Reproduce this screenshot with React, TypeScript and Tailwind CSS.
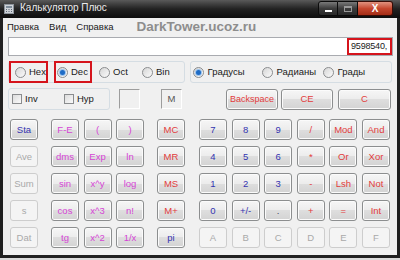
import clsx from "clsx";

type Tone = "b" | "p" | "r" | "d" | "k";

const toneText: Record<Tone, string> = {
  b: "text-[#3434b0]",
  p: "text-[#d544d5]",
  r: "text-[#e23c3c]",
  d: "text-[#a9a9a9]",
  k: "text-[#44445a]",
};

const colA: [string, Tone][] = [["Sta", "b"], ["Ave", "d"], ["Sum", "d"], ["s", "d"], ["Dat", "d"]];
const colsB: [string, Tone][][] = [
  [["F-E", "p"], ["dms", "p"], ["sin", "p"], ["cos", "p"], ["tg", "p"]],
  [["(", "p"], ["Exp", "p"], ["x^y", "p"], ["x^3", "p"], ["x^2", "p"]],
  [[")", "p"], ["ln", "p"], ["log", "p"], ["n!", "p"], ["1/x", "p"]],
];
const colE: [string, Tone][] = [["MC", "r"], ["MR", "r"], ["MS", "r"], ["M+", "r"], ["pi", "b"]];
const colsF: [string, Tone][][] = [
  [["7", "b"], ["4", "b"], ["1", "b"], ["0", "b"], ["A", "d"]],
  [["8", "b"], ["5", "b"], ["2", "b"], ["+/-", "b"], ["B", "d"]],
  [["9", "b"], ["6", "b"], ["3", "b"], [".", "k"], ["C", "d"]],
  [["/", "r"], ["*", "r"], ["-", "r"], ["+", "r"], ["D", "d"]],
  [["Mod", "r"], ["Or", "r"], ["Lsh", "r"], ["=", "r"], ["E", "d"]],
  [["And", "r"], ["Xor", "r"], ["Not", "r"], ["Int", "r"], ["F", "d"]],
];

function Key({ label, tone, className }: { label: string; tone: Tone; className?: string }) {
  const off = tone === "d";
  return (
    <div
      className={clsx(
        "flex h-[21px] items-center justify-center rounded-[3px] border text-[9.5px] leading-none",
        off
          ? "border-[#cdcdcd] bg-[#f4f4f4]"
          : "border-[#8c8e8f] bg-[linear-gradient(#f6f6f6,#ececec_50%,#dedede_50%,#d3d3d3)] shadow-[inset_0_0_0_1px_#fbfbfb]",
        toneText[tone],
        className ?? "w-[28px]"
      )}
    >
      {label}
    </div>
  );
}

function Column({ keys }: { keys: [string, Tone][] }) {
  return (
    <div className="flex flex-col gap-[6px]">
      {keys.map(([l, t]) => (
        <Key key={l} label={l} tone={t} />
      ))}
    </div>
  );
}

function Radio({ on }: { on?: boolean }) {
  return (
    <span className="flex h-[11px] w-[11px] shrink-0 items-center justify-center rounded-full border border-[#8a8c8e] bg-linear-to-br from-[#d6d6d6] to-[#fbfbfb]">
      {on && <span className="h-[5px] w-[5px] rounded-full bg-[#1e6cc6] shadow-[0_0_0_1px_#9cc3ec]" />}
    </span>
  );
}

function Check() {
  return (
    <span className="h-[10px] w-[10px] shrink-0 border border-[#8a8c8e] bg-linear-to-br from-[#dcdcdc] to-[#fafafa]" />
  );
}

export default function App() {
  return (
    <div className="h-[260px] w-[400px] bg-[#dadada] font-['Liberation_Sans',Arial,sans-serif]">
      <div className="flex h-[258px] flex-col bg-[#202020]">
        {/* title bar */}
        <div className="flex h-[18px] items-start bg-linear-to-b from-[#5a5a5a] via-[#222222] to-[#0e0e0e]">
          <svg className="ml-[4px] mt-[4px]" width="10" height="10" viewBox="0 0 10 10">
            <rect x="0.5" y="0.5" width="9" height="9" fill="#cfd3d8" stroke="#8d949c" />
            <rect x="2" y="2" width="6" height="2" fill="#7d8b99" />
            <path d="M2 5.5h1M4.5 5.5h1M7 5.5h1M2 7.5h1M4.5 7.5h1M7 7.5h1" stroke="#5a6572" />
          </svg>
          <span className="ml-[6px] mt-[3px] text-[10px] leading-none text-[#ececec]">Калькулятор Плюс</span>
          <div className="ml-auto mr-[7px] mt-[1px] flex">
            <div className="flex h-[15px] w-[20px] items-end justify-center rounded-l-[3px] border border-[#0c0c0c] bg-linear-to-b from-[#7a7a7a] via-[#3c3c3c] to-[#2a2a2a] pb-[3px]">
              <span className="h-[2px] w-[7px] bg-white" />
            </div>
            <div className="flex h-[15px] w-[20px] items-center justify-center border border-l-0 border-[#0c0c0c] bg-linear-to-b from-[#7a7a7a] via-[#3c3c3c] to-[#2a2a2a]">
              <span className="h-[6px] w-[8px] border border-t-2 border-[#9a9a9a]" />
            </div>
            <div className="flex h-[15px] w-[35px] items-center justify-center rounded-r-[3px] border border-l-0 border-[#3a0c06] bg-linear-to-b from-[#e0927f] via-[#c5472f] to-[#a42d16] text-[10px] font-bold leading-none text-white">
              X
            </div>
          </div>
        </div>

        {/* client area */}
        <div className="mx-[3px] flex h-[237px] flex-col bg-[#f0f0f0] px-[5px]">
          <div className="-ml-[1px] flex h-[18px] items-center gap-[10px] text-[9.5px] text-[#1a1a1a]">
            <span>Правка</span>
            <span>Вид</span>
            <span>Справка</span>
            <span className="ml-[13px] text-[13.5px] font-bold text-[#8d8d8d]">DarkTower.ucoz.ru</span>
          </div>

          <div className="mt-[1px] flex h-[19px] w-[385px] justify-end border border-[#a9abb0] bg-white">
            <div className="flex h-full items-center border-2 border-[#d5141c] pl-[2px] pr-[3px] text-[9px] tracking-[-0.2px] text-[#1a1a1a]">
              9598540,
            </div>
          </div>

          {/* base / angle radios */}
          <div className="mt-[5px] flex h-[22px] text-[9.5px] text-[#1a1a1a]">
            <div className="flex w-[177px] items-center rounded-[3px] border border-[#d5dde3]">
              <div className="flex h-[22px] w-[39px] shrink-0 items-center gap-[3px] border-2 border-[#d5141c] pl-[4px]">
                <Radio />
                <span>Hex</span>
              </div>
              <div className="ml-[6px] flex h-[22px] w-[38px] shrink-0 items-center gap-[3px] border-2 border-[#d5141c] pl-[1px]">
                <Radio on />
                <span>Dec</span>
              </div>
              <div className="ml-[7px] flex w-[43px] items-center gap-[3px]">
                <Radio />
                <span>Oct</span>
              </div>
              <div className="flex items-center gap-[3px]">
                <Radio />
                <span>Bin</span>
              </div>
            </div>
            <div className="ml-[5px] flex w-[203px] items-center rounded-[3px] border border-[#d5dde3] pl-[2px]">
              <div className="flex w-[69px] items-center gap-[4px]">
                <Radio on />
                <span>Градусы</span>
              </div>
              <div className="flex w-[61px] items-center gap-[4px]">
                <Radio />
                <span>Радианы</span>
              </div>
              <div className="flex items-center gap-[4px]">
                <Radio />
                <span>Грады</span>
              </div>
            </div>
          </div>

          {/* inv / hyp / memory / clear */}
          <div className="mt-[5px] flex h-[22px] items-center text-[9.5px] text-[#1a1a1a]">
            <div className="flex h-[22px] w-[102px] items-center rounded-[3px] border border-[#d5dde3] pl-[3px]">
              <div className="flex w-[52px] items-center gap-[3px]">
                <Check />
                <span>Inv</span>
              </div>
              <div className="flex items-center gap-[3px]">
                <Check />
                <span>Hyp</span>
              </div>
            </div>
            <div className="ml-[9px] h-[20px] w-[21px] border border-b-white border-l-[#9d9d9d] border-r-white border-t-[#9d9d9d]" />
            <div className="ml-[21px] flex h-[20px] w-[21px] items-center justify-center border border-b-white border-l-[#9d9d9d] border-r-white border-t-[#9d9d9d] text-[#555]">
              M
            </div>
            <Key label="Backspace" tone="r" className="ml-[44px] w-[52px] text-[9px]" />
            <Key label="CE" tone="r" className="ml-[3px] w-[52px]" />
            <Key label="C" tone="r" className="ml-[5px] w-[53px]" />
          </div>

          {/* keypad */}
          <div className="mt-[9px] flex">
            <div className="ml-[2px]">
              <Column keys={colA} />
            </div>
            <div className="ml-[13px] flex gap-[4.5px]">
              {colsB.map((c, i) => (
                <Column key={i} keys={c} />
              ))}
            </div>
            <div className="ml-[13px]">
              <Column keys={colE} />
            </div>
            <div className="ml-[14px] flex gap-[4.6px]">
              {colsF.map((c, i) => (
                <Column key={i} keys={c} />
              ))}
            </div>
          </div>
        </div>
      </div>
    </div>
  );
}
